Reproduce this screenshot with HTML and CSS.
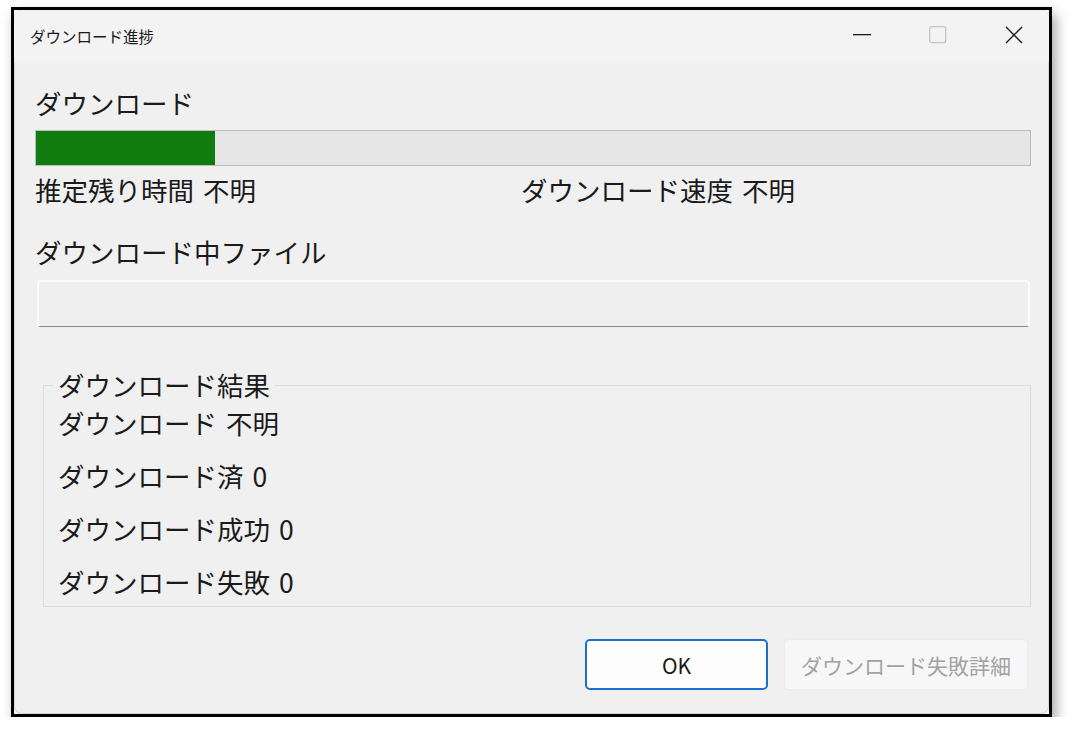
FILE: index.html
```html
<!DOCTYPE html>
<html lang="ja">
<head>
    <meta charset="UTF-8">
    <meta name="viewport" content="width=device-width, initial-scale=1.0">
    <title>ダウンロード進捗</title>
    <link rel="stylesheet" href="styles.css">
</head>
<body>
    <div class="frame">
        <div class="window">
            <div class="titlebar">
                <span class="title">ダウンロード進捗</span>
                <div class="caption-buttons">
                    <span class="caption-btn">
                        <svg width="18" height="2" viewBox="0 0 18 2"><rect x="0" y="0" width="18" height="1.3" fill="#1b1b1b"/></svg>
                    </span>
                    <span class="caption-btn">
                        <svg width="18" height="18" viewBox="0 0 18 18"><rect x="0.7" y="0.7" width="16" height="16" rx="2" fill="none" stroke="#c4c4c4" stroke-width="1.3"/></svg>
                    </span>
                    <span class="caption-btn">
                        <svg width="18" height="18" viewBox="0 0 18 18"><path d="M1 1 L17 17 M17 1 L1 17" stroke="#1b1b1b" stroke-width="1.4" fill="none"/></svg>
                    </span>
                </div>
            </div>

            <div class="content">
                <div class="label">ダウンロード</div>
                <div class="progress">
                    <div class="progress-fill" style="width: 18%;"></div>
                </div>

                <div class="stats">
                    <span>推定残り時間 不明</span>
                    <span>ダウンロード速度 不明</span>
                </div>

                <div class="label file-label">ダウンロード中ファイル</div>
                <div class="file-box"></div>

                <fieldset class="results">
                    <legend>ダウンロード結果</legend>
                    <div class="result-list">
                        <div>ダウンロード 不明</div>
                        <div>ダウンロード済 0</div>
                        <div>ダウンロード成功 0</div>
                        <div>ダウンロード失敗 0</div>
                    </div>
                </fieldset>

                <div class="actions">
                    <button class="btn btn-default">OK</button>
                    <button class="btn" disabled>ダウンロード失敗詳細</button>
                </div>
            </div>
        </div>
    </div>
</body>
</html>
```

FILE: styles.css
```css
body {
    margin: 0;
    background: #ffffff;
    font-family: "Noto Sans CJK JP", sans-serif;
    color: #1a1a1a;
}
.frame {
    box-sizing: border-box;
    width: 1041px;
    height: 710px;
    margin: 7px 0 0 11px;
    border: 3px solid #000;
    background: #f7f7f7;
    box-shadow: 4px 7px 12px rgba(0,0,0,0.35);
}
.window {
    height: 100%;
    background: #f0f0f0;
    border-radius: 8px;
    box-shadow: inset 0 0 0 1px #d6d6d6;
    overflow: hidden;
}
.titlebar {
    height: 52px;
    display: flex;
    align-items: center;
    justify-content: space-between;
    padding-left: 16px;
    background: #f3f3f3;
}
.title {
    font-size: 15.5px;
}
.caption-buttons {
    display: flex;
    gap: 6px;
    align-self: stretch;
}
.caption-btn {
    width: 70px;
    display: flex;
    align-items: center;
    justify-content: center;
    margin-top: -2px;
}
.content {
    padding: 26px 18px 0 21px;
    font-size: 26.5px;
    line-height: 30px;
    word-spacing: 3px;
}
.progress {
    box-sizing: border-box;
    height: 36px;
    margin-top: 12px;
    background: #e6e6e6;
    border: 1px solid #bcbcbc;
}
.progress-fill {
    height: 100%;
    background: #107c10;
}
.stats {
    display: grid;
    grid-template-columns: 486px 1fr;
    margin-top: 9px;
}
.file-label {
    margin-top: 32px;
}
.file-box {
    box-sizing: border-box;
    height: 47px;
    margin: 13px 1px 0 2px;
    background: #efefef;
    border: 2px solid #fbfbfb;
    border-bottom: 1px solid #888;
    border-radius: 4px;
}
.results {
    margin: 43px 0 0 8px;
    padding: 0 9px 9px;
    border: 1px solid #dcdcdc;
    min-width: 0;
}
.results legend {
    padding: 0 5px;
}
.result-list {
    display: flex;
    flex-direction: column;
    gap: 23px;
    margin-top: 8px;
    padding-left: 5px;
}
.actions {
    display: flex;
    justify-content: flex-end;
    gap: 16px;
    margin-top: 32px;
    padding-right: 3px;
}
.btn {
    box-sizing: border-box;
    height: 51px;
    padding: 0 16px;
    font-family: inherit;
    font-size: 21px;
    word-spacing: 0;
    border-radius: 5px;
    border: 1px solid #ececec;
    background: #f7f7f7;
    color: #a2a2a2;
}
.btn-default {
    width: 183px;
    background: #fdfdfd;
    color: #1a1a1a;
    border: 2px solid #1d6fce;
}
```
